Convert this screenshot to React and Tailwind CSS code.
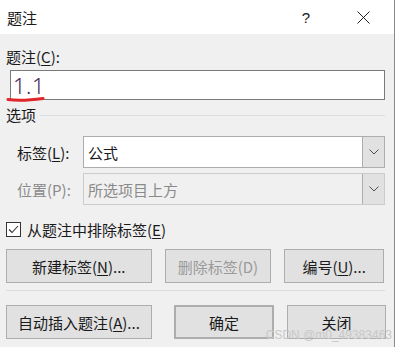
import React from "react";

const F = { fontFamily: '"Noto Sans CJK SC", "Noto Sans", sans-serif' };

function Chevron() {
  return (
    <svg width="10" height="6" viewBox="0 0 10 6" fill="none">
      <path d="M0.5 0.5 L5 5 L9.5 0.5" stroke="#505050" strokeWidth="1" />
    </svg>
  );
}

function Btn({ children, className = "", disabled = false }) {
  return (
    <div
      className={`flex items-center justify-center h-[34px] bg-[#e1e1e1] border border-[#adadad] text-[15px] leading-none ${disabled ? "text-[#9a9a9a]" : "text-[#1a1a1a]"} ${className}`}
    >
      {children}
    </div>
  );
}

export default function App() {
  return (
    <div
      className="relative w-[395px] h-[347px] bg-[#f0f0f0] border-r border-[#8a8a8a] overflow-hidden text-[#1a1a1a]"
      style={F}
    >
      {/* title bar */}
      <div className="h-[34px] bg-white flex items-center pl-[7px] text-[15px] leading-none">
        <span>题注</span>
        <span className="ml-auto mr-[47px] text-[15px]" style={{ fontFamily: '"Liberation Sans", sans-serif' }}>?</span>
        <svg className="mr-[24px]" width="13" height="13" viewBox="0 0 13 13">
          <path d="M0.5 0.5 L12.5 12.5 M12.5 0.5 L0.5 12.5" stroke="#222" strokeWidth="1" />
        </svg>
      </div>

      <div className="px-[6px]">
        <div className="mt-[15px] text-[15px] leading-[16px]">
          题注(<span className="underline underline-offset-2">C</span>):
        </div>
        <div className="relative ml-[4px] mr-[3px] mt-[5px] h-[30px] bg-white border border-[#7a7a7a] flex items-center pl-[2px]">
          <span
            className="text-[22px] leading-none font-light text-[#47285a] tracking-[0.5px]"
            style={{ fontFamily: '"Noto Sans", sans-serif' }}
          >
            1.1
          </span>
          <svg className="absolute left-[-5px] top-[24px]" width="40" height="8" viewBox="0 0 40 8">
            <path d="M2 4.5 C 12 6, 26 5, 37 3.5" stroke="#e0262a" strokeWidth="3" strokeLinecap="round" fill="none" />
          </svg>
        </div>

        <div className="mt-[6px] flex items-center">
          <span className="text-[15px] leading-[18px]">选项</span>
          <div className="flex-1 ml-[4px] mr-[3px] h-px bg-[#dcdcdc]" />
        </div>

        <div className="mt-[12px] ml-[11px] mr-[3px] flex items-center">
          <span className="w-[66px] text-[15px] leading-none">
            标签(<span className="underline underline-offset-2">L</span>):
          </span>
          <div className="flex-1 h-[32px] bg-white border border-[#adadad] flex items-center">
            <span className="pl-[4px] text-[15px] leading-none">公式</span>
            <div className="ml-auto h-full w-[22px] bg-[#e1e1e1] border-l border-[#adadad] flex items-center justify-center">
              <Chevron />
            </div>
          </div>
        </div>

        <div className="mt-[5px] ml-[11px] mr-[3px] flex items-center text-[#8a8a8a]">
          <span className="w-[66px] text-[15px] leading-none">位置(P):</span>
          <div className="flex-1 h-[32px] bg-[#f0f0f0] border border-[#cccccc] flex items-center">
            <span className="pl-[4px] text-[15px] leading-none">所选项目上方</span>
            <div className="ml-auto h-full w-[22px] bg-[#e1e1e1] border-l border-[#adadad] flex items-center justify-center">
              <Chevron />
            </div>
          </div>
        </div>

        <div className="mt-[17px] flex items-center">
          <div className="w-[15px] h-[15px] bg-white border border-[#333] flex items-center justify-center">
            <svg width="11" height="9" viewBox="0 0 11 9">
              <path d="M1 4.5 L4 7.5 L10 1" stroke="#333" strokeWidth="1.1" fill="none" />
            </svg>
          </div>
          <span className="ml-[6px] text-[15px] leading-none">
            从题注中排除标签(<span className="underline underline-offset-2">E</span>)
          </span>
        </div>

        <div className="mt-[12px] flex pr-[4px]">
          <Btn className="w-[146px]">
            新建标签(<span className="underline underline-offset-2">N</span>)...
          </Btn>
          <Btn className="w-[107px] ml-[13px]" disabled>
            删除标签(D)
          </Btn>
          <Btn className="w-[100px] ml-[13px]">
            编号(<span className="underline underline-offset-2">U</span>)...
          </Btn>
        </div>

        <div className="mt-[7px] mr-[3px] h-px bg-[#dcdcdc]" />

        <div className="mt-[14px] flex">
          <Btn className="w-[146px]">
            自动插入题注(<span className="underline underline-offset-2">A</span>)...
          </Btn>
          <Btn className="w-[100px] ml-[22px] border-2 border-[#0078d7]">确定</Btn>
          <Btn className="w-[99px] ml-[13px]">关闭</Btn>
        </div>
      </div>

      <div
        className="absolute right-[2px] bottom-[6px] text-[12px] leading-none text-[#c8c8c8]"
        style={{ fontFamily: '"Liberation Sans", sans-serif' }}
      >
        CSDN @m0_49383463
      </div>
    </div>
  );
}
